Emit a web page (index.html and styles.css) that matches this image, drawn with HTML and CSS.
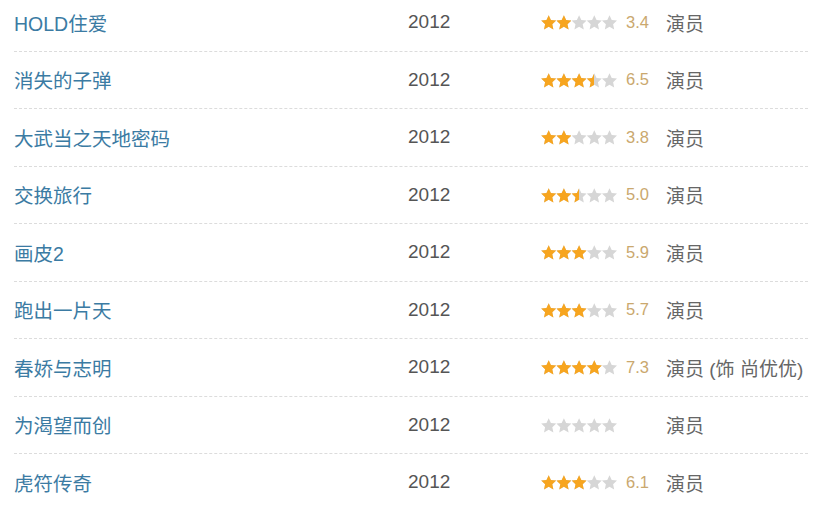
FILE: index.html
```html
<!DOCTYPE html>
<html lang="zh">
<head>
<meta charset="utf-8">
<link rel="stylesheet" href="styles.css">
</head>
<body>
<svg class="defs" width="0" height="0" aria-hidden="true">
  <defs>
    <symbol id="star" viewBox="0 0 20 19">
      <path d="M10 0l2.9 6.2 6.9.8-5.1 4.7 1.4 6.9L10 15.1l-6.1 3.5 1.4-6.9L.2 7l6.9-.8z"/>
    </symbol>
    <symbol id="five" viewBox="0 0 76 15">
      <use href="#star" x="0" y="0" width="15.4" height="15"/>
      <use href="#star" x="15.2" y="0" width="15.4" height="15"/>
      <use href="#star" x="30.4" y="0" width="15.4" height="15"/>
      <use href="#star" x="45.6" y="0" width="15.4" height="15"/>
      <use href="#star" x="60.8" y="0" width="15.4" height="15"/>
    </symbol>
  </defs>
</svg>
<ul class="list">
  <li class="row"><a class="title">HOLD住爱</a><span class="year">2012</span><span class="rating"><span class="stars"><svg class="off"><use href="#five"/></svg><span class="on" style="width:30.4px"><svg><use href="#five"/></svg></span></span><span class="num">3.4</span></span><span class="role">演员</span></li>
  <li class="row"><a class="title">消失的子弹</a><span class="year">2012</span><span class="rating"><span class="stars"><svg class="off"><use href="#five"/></svg><span class="on" style="width:53.2px"><svg><use href="#five"/></svg></span></span><span class="num">6.5</span></span><span class="role">演员</span></li>
  <li class="row"><a class="title">大武当之天地密码</a><span class="year">2012</span><span class="rating"><span class="stars"><svg class="off"><use href="#five"/></svg><span class="on" style="width:30.4px"><svg><use href="#five"/></svg></span></span><span class="num">3.8</span></span><span class="role">演员</span></li>
  <li class="row"><a class="title">交换旅行</a><span class="year">2012</span><span class="rating"><span class="stars"><svg class="off"><use href="#five"/></svg><span class="on" style="width:38px"><svg><use href="#five"/></svg></span></span><span class="num">5.0</span></span><span class="role">演员</span></li>
  <li class="row"><a class="title">画皮2</a><span class="year">2012</span><span class="rating"><span class="stars"><svg class="off"><use href="#five"/></svg><span class="on" style="width:45.6px"><svg><use href="#five"/></svg></span></span><span class="num">5.9</span></span><span class="role">演员</span></li>
  <li class="row"><a class="title">跑出一片天</a><span class="year">2012</span><span class="rating"><span class="stars"><svg class="off"><use href="#five"/></svg><span class="on" style="width:45.6px"><svg><use href="#five"/></svg></span></span><span class="num">5.7</span></span><span class="role">演员</span></li>
  <li class="row"><a class="title">春娇与志明</a><span class="year">2012</span><span class="rating"><span class="stars"><svg class="off"><use href="#five"/></svg><span class="on" style="width:60.8px"><svg><use href="#five"/></svg></span></span><span class="num">7.3</span></span><span class="role">演员 (饰 尚优优)</span></li>
  <li class="row"><a class="title">为渴望而创</a><span class="year">2012</span><span class="rating"><span class="stars"><svg class="off"><use href="#five"/></svg><span class="on" style="width:0px"><svg><use href="#five"/></svg></span></span><span class="num"></span></span><span class="role">演员</span></li>
  <li class="row"><a class="title">虎符传奇</a><span class="year">2012</span><span class="rating"><span class="stars"><svg class="off"><use href="#five"/></svg><span class="on" style="width:45.6px"><svg><use href="#five"/></svg></span></span><span class="num">6.1</span></span><span class="role">演员</span></li>
</ul>
</body>
</html>
```
FILE: styles.css
```css
html, body {
  margin: 0;
  padding: 0;
  background: #ffffff;
}
body {
  font-family: "Liberation Sans", Arial, "Noto Sans CJK SC", sans-serif;
  overflow: hidden;
}
.defs {
  position: absolute;
  width: 0;
  height: 0;
}
.list {
  list-style: none;
  margin: -6px 0 0 14px;
  padding: 0;
  width: 794px;
}
.row {
  display: grid;
  grid-template-columns: 394px 133px auto 1fr;
  align-items: center;
  height: 56.5px;
  border-bottom: 1px dashed #dcdcdc;
}
.title {
  color: #3b7ba3;
  font-size: 19.5px;
  text-decoration: none;
}
.year {
  color: #555555;
  font-size: 19px;
}
.rating {
  display: flex;
  align-items: center;
  width: 125px;
}
.stars {
  position: relative;
  display: block;
  width: 76px;
  height: 15px;
  margin-top: 1px;
}
.stars svg {
  display: block;
  width: 76px;
  height: 15px;
}
.off {
  fill: #d6d6d6;
}
.on {
  position: absolute;
  left: 0;
  top: 0;
  height: 15px;
  overflow: hidden;
  fill: #f7a51f;
}
.num {
  margin-left: 9px;
  color: #caa86e;
  font-size: 16.5px;
}
.role {
  color: #666666;
  font-size: 19px;
}
```
